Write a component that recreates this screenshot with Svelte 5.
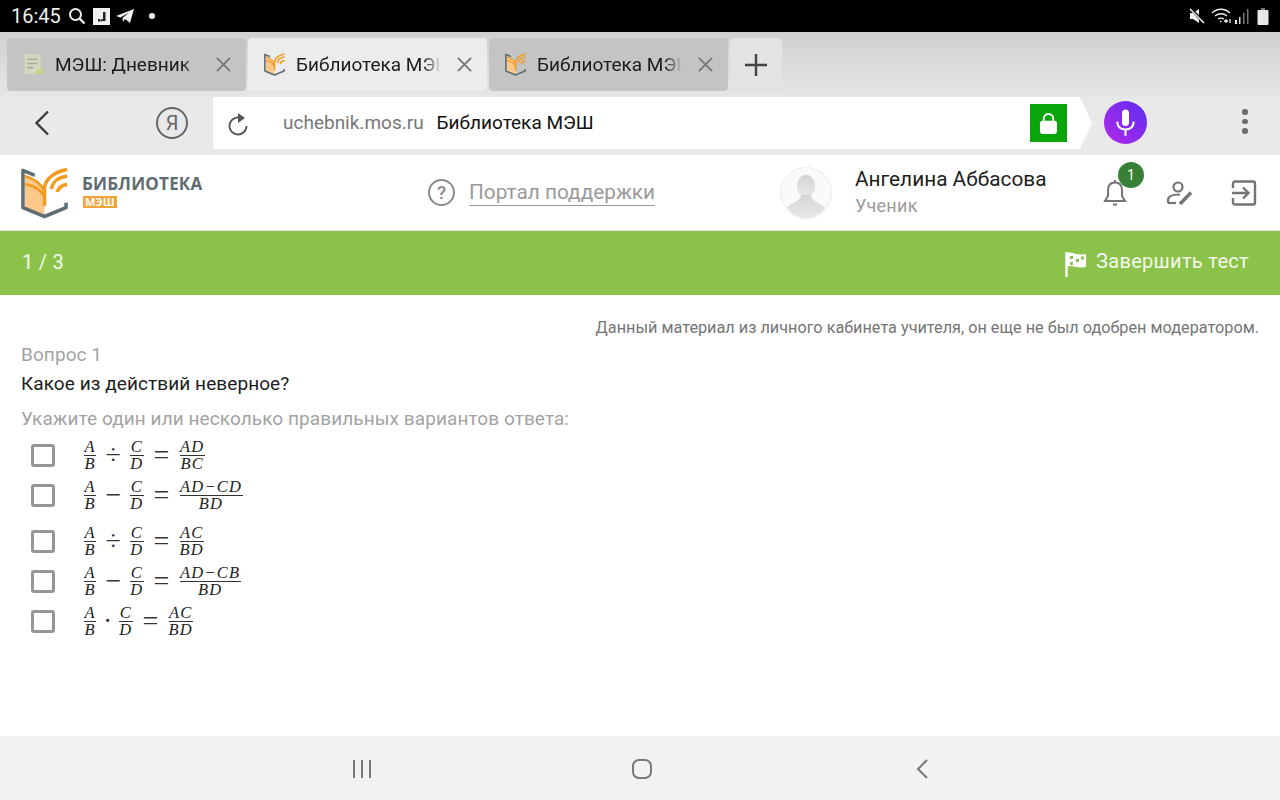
<script>
	const tabs = [
		{ title: 'МЭШ: Дневник', icon: 'doc', active: false },
		{ title: 'Библиотека МЭШ', icon: 'book', active: true },
		{ title: 'Библиотека МЭШ', icon: 'book', active: false }
	];

	const answers = [
		{ a: 'A', b: 'B', op: '÷', c: 'C', d: 'D', n: 'AD', m: 'BC' },
		{ a: 'A', b: 'B', op: '−', c: 'C', d: 'D', n: 'AD−CD', m: 'BD', tall: true },
		{ a: 'A', b: 'B', op: '÷', c: 'C', d: 'D', n: 'AC', m: 'BD' },
		{ a: 'A', b: 'B', op: '−', c: 'C', d: 'D', n: 'AD−CB', m: 'BD' },
		{ a: 'A', b: 'B', op: '·', c: 'C', d: 'D', n: 'AC', m: 'BD', narrow: true }
	];
</script>

{#snippet book(cls)}
	<svg class={cls} viewBox="0 0 48 52">
		<path d="M24 22 C19 14 11 9 4 7 V41 L24 48 Z" fill="#fcc98a" />
		<path d="M4 9 C12 11 20 16 24 24 M4 17 C12 18 19 22 24 29" fill="none" stroke="#f39a1f" stroke-width="2.600" />
		<path d="M14 8 L2 3 V41 L24 50 L46 41 V36" fill="none" stroke="#5f6e76" stroke-width="3.600" stroke-linejoin="round" />
		<path d="M24 39 V20 C26 10 36 4 47 2" fill="none" stroke="#f39a1f" stroke-width="3.600" />
		<path d="M31 22 C32 15 38 10 47 9" fill="none" stroke="#f39a1f" stroke-width="3.600" />
		<path d="M37 25 C38 21 42 18 47 17" fill="none" stroke="#f39a1f" stroke-width="3.600" />
	</svg>
{/snippet}

{#snippet frac(top, bottom)}
	<span class="frac">
		<span class="num">{top}</span>
		<span class="den">{bottom}</span>
	</span>
{/snippet}

<div class="screen">
	<!-- Status bar -->
	<div class="status">
		<span class="clock">16:45</span>
		<svg class="st-search" viewBox="0 0 18 18"><circle cx="7.500" cy="7.500" r="5.500" fill="none" stroke="#eee" stroke-width="2" /><path d="M11.500 11.500 L16.500 16.500" stroke="#eee" stroke-width="2.400" /></svg>
		<span class="st-j"><svg viewBox="0 0 17 17"><path d="M10 4 h2.500 v9 h-2.500 z M5 11 h2.500 v2.500 h-2.500 z M8 11.500 L10 11 V13 L8 13.500 Z" fill="#222" /></svg></span>
		<svg class="st-plane" viewBox="0 0 18 16"><path d="M0 8 L18 1 L14 15 L9 11 L7 14 L6.500 10 L13 4.500 L4.500 9.500 Z" fill="#eee" /></svg>
		<span class="st-dot"></span>
		<span class="status-space"></span>
		<svg class="st-mute" viewBox="0 0 16 16"><path d="M1 5 H4 L10 1 V15 L4 11 H1 Z" fill="#f2f2f2" /><path d="M2 1 L15 15" stroke="#000" stroke-width="3" /><path d="M1 1 L15 15" stroke="#f2f2f2" stroke-width="1.500" /></svg>
		<svg class="st-wifi" viewBox="0 0 20 16"><path d="M1 5 C6 0 14 0 19 5 M4 8 C7.500 5 12.500 5 16 8 M7 11 C8.500 10 11.500 10 13 11" fill="none" stroke="#eee" stroke-width="1.300" /><path d="M9 13.500 h1.500 M13 13 h4 M15 11 v4 M19 15 v-4" stroke="#eee" stroke-width="1.300" /></svg>
		<svg class="st-signal" viewBox="0 0 16 16"><path d="M1 12 h2 v4 h-2 z" fill="#eee" /><path d="M5 9 h1.500 v7 h-1.500 z" fill="#ddd" /><path d="M9 5 h1.500 v11 h-1.500 z M13 1 h1.500 v15 h-1.500 z" fill="#777" /></svg>
		<svg class="st-batt" viewBox="0 0 12 17"><path d="M4 0 h4 v2 h-4 z" fill="#777" /><rect x="0.500" y="2" width="11" height="15" rx="1" fill="#e8e8e8" /></svg>
	</div>

	<!-- Browser tabs -->
	<div class="chrome">
		<div class="tabs">
			{#each tabs as tab}
				<div class="tab" class:active={tab.active}>
					{#if tab.icon === 'doc'}
						<svg class="fav" viewBox="0 0 20 22">
							<rect x="1" y="1" width="16" height="19" rx="1" fill="#d4d8c0" stroke="#c4cdb0" />
							<path d="M4 6 h10 M4 10 h10 M4 14 h6" stroke="#a9b0a4" stroke-width="1.500" />
							<path d="M11 20 C12 16 15 14 19 14 V20 Z" fill="#c5d58a" />
						</svg>
					{:else}
						{@render book('fav')}
					{/if}
					<span class="tab-title">{tab.title}</span>
					<svg class="tab-x" viewBox="0 0 16 16"><path d="M1 1 L15 15 M15 1 L1 15" stroke="#777" stroke-width="2" /></svg>
				</div>
			{/each}
			<div class="tab-new">
				<svg viewBox="0 0 24 24"><path d="M12 1 V23 M1 12 H23" stroke="#444" stroke-width="2.400" /></svg>
			</div>
		</div>

		<!-- Address bar -->
		<div class="toolbar">
			<div class="tb-back">
				<svg viewBox="0 0 16 26"><path d="M14 1.500 L2.500 13 L14 24.500" fill="none" stroke="#3d3d3d" stroke-width="2.400" /></svg>
			</div>
			<div class="tb-ya">Я</div>
			<div class="urlbar">
				<svg class="reload" viewBox="0 0 22 24"><path d="M15 6.500 A8.500 8.500 0 1 0 19.500 14" fill="none" stroke="#555" stroke-width="1.800" /><path d="M11 1 L18 6 L11 11 Z" fill="#555" /></svg>
				<span class="domain">uchebnik.mos.ru</span>
				<span class="page-title">Библиотека МЭШ</span>
				<span class="lock">
					<svg viewBox="0 0 20 24"><path d="M5 10 V7 A5 5 0 0 1 15 7 V10" fill="none" stroke="#fff" stroke-width="2" /><rect x="1" y="9" width="18" height="14" rx="3" fill="#fff" /></svg>
				</span>
			</div>
			<div class="urltip"></div>
			<div class="mic">
				<svg viewBox="0 0 24 32"><rect x="8" y="1" width="8" height="19" rx="4" fill="#fff" /><path d="M2.500 15 C3 21 7 24 12 24 C17 24 21 21 21.500 15 M12 24 V31" fill="none" stroke="#fff" stroke-width="2.400" /></svg>
			</div>
			<div class="dots"><span></span><span></span><span></span></div>
		</div>
	</div>

	<!-- Site header -->
	<header class="site">
		<div class="logo">
			{@render book('logo-mark')}
			<div class="logo-text">
				<span class="logo-name">БИБЛИОТЕКА</span>
				<span class="logo-badge">МЭШ</span>
			</div>
		</div>
		<div class="support">
			<span class="support-q">?</span>
			<span class="support-link">Портал поддержки</span>
		</div>
		<div class="user">
			<div class="avatar">
				<svg viewBox="0 0 52 52">
					<defs>
						<linearGradient id="av" x1="0" y1="0" x2="0" y2="1">
							<stop offset="0" stop-color="#d4d4d4" />
							<stop offset="1" stop-color="#e9e9e9" />
						</linearGradient>
					</defs>
					<ellipse cx="26" cy="19" rx="9.500" ry="12" fill="url(#av)" />
					<path d="M21 28 C21 34 12 36 6 41 C12 49 19 52 26 52 C33 52 40 49 46 41 C40 36 31 34 31 28 Z" fill="url(#av)" />
				</svg>
			</div>
			<div class="user-text">
				<span class="user-name">Ангелина Аббасова</span>
				<span class="user-role">Ученик</span>
			</div>
		</div>
		<div class="actions">
			<div class="act bell">
				<svg viewBox="0 0 26 28"><path d="M13 3.500 C8 3.500 6 7 6 11 V17 L3 22 H23 L20 17 V11 C20 7 18 3.500 13 3.500 Z M13 1 V3.500 M11 25.500 H15" fill="none" stroke="#757575" stroke-width="2" /></svg>
				<span class="badge">1</span>
			</div>
			<div class="act edit">
				<svg viewBox="0 0 28 26"><circle cx="12" cy="7" r="4.500" fill="none" stroke="#757575" stroke-width="2.200" /><path d="M2 23 V20 C2 16 7 14.500 14 14.500" fill="none" stroke="#757575" stroke-width="2.200" /><path d="M2 23 H10" stroke="#757575" stroke-width="2.200" /><path d="M14 24 L25 12.500" stroke="#757575" stroke-width="3.400" /></svg>
			</div>
			<div class="act exit">
				<svg viewBox="0 0 26 26"><path d="M2 8 V3.500 A2 2 0 0 1 4 1.500 H22 A2 2 0 0 1 24 3.500 V22.500 A2 2 0 0 1 22 24.500 H4 A2 2 0 0 1 2 22.500 V18 M1 13 H17 M12 7.500 L17.500 13 L12 18.500" fill="none" stroke="#757575" stroke-width="2.400" /></svg>
			</div>
		</div>
	</header>

	<!-- Test progress -->
	<div class="progress">
		<span class="count">1 / 3</span>
		<span class="finish">
			<svg viewBox="0 0 22 26"><path d="M1.500 1 V26" stroke="#fff" stroke-width="2.400" /><path d="M2 2 C7 0 11 5 21 3 V16 C11 18 7 13 2 16 Z" fill="#fff" /><path d="M5 5 h3 v3 h-3 z M11 8 h3 v3 h-3 z M16 5.500 h3 v3 h-3 z M5 11 h3 v3 h-3 z" fill="#8bc34a" /></svg>
			<span class="finish-label">Завершить тест</span>
		</span>
	</div>

	<!-- Question -->
	<main class="content">
		<p class="note">Данный материал из личного кабинета учителя, он еще не был одобрен модератором.</p>
		<p class="q-num">Вопрос 1</p>
		<p class="q-text">Какое из действий неверное?</p>
		<p class="q-hint">Укажите один или несколько правильных вариантов ответа:</p>
		<div class="answers">
			{#each answers as item}
				<div class="answer" class:tall={item.tall}>
					<span class="check"></span>
					<span class="math">
						{@render frac(item.a, item.b)}
						<span class="op" class:narrow={item.narrow}>{item.op}</span>
						{@render frac(item.c, item.d)}
						<span class="eq">=</span>
						{@render frac(item.n, item.m)}
					</span>
				</div>
			{/each}
		</div>
	</main>

	<!-- Android nav -->
	<nav class="android">
		<svg viewBox="0 0 20 20"><path d="M2 1 V19 M10 1 V19 M18 1 V19" stroke="#7a7a7a" stroke-width="2" /></svg>
		<svg viewBox="0 0 20 20"><rect x="1" y="1" width="18" height="18" rx="6" fill="none" stroke="#7a7a7a" stroke-width="2" /></svg>
		<svg viewBox="0 0 20 20"><path d="M15 1 L6 10 L15 19" fill="none" stroke="#7a7a7a" stroke-width="2" /></svg>
	</nav>
</div>

<style>
	:global(body) {
		margin: 0;
		background: #fff;
	}
	.screen {
		width: 1280px;
		height: 800px;
		display: flex;
		flex-direction: column;
		overflow: hidden;
		font-family: Roboto, 'Noto Sans', sans-serif;
		color: #212121;
	}
	p {
		margin: 0;
	}

	.status {
		height: 32px;
		background: #000;
		display: flex;
		align-items: center;
		padding: 0 11px 0 11px;
		flex-shrink: 0;
	}
	.clock {
		font-size: 20px;
		color: #eee;
		margin-right: 7px;
	}
	.st-search {
		width: 18px;
		height: 18px;
		margin-right: 7px;
	}
	.st-j {
		width: 17px;
		height: 17px;
		background: #f0f0f0;
		margin-right: 6px;
		display: flex;
	}
	.st-plane {
		width: 18px;
		height: 16px;
		margin-right: 15px;
	}
	.st-dot {
		width: 6px;
		height: 6px;
		border-radius: 50%;
		background: #eee;
	}
	.status-space {
		flex: 1;
	}
	.st-mute {
		width: 16px;
		height: 16px;
		margin-right: 6px;
	}
	.st-wifi {
		width: 20px;
		height: 16px;
		margin-right: 3px;
	}
	.st-signal {
		width: 16px;
		height: 16px;
		margin-right: 7px;
	}
	.st-batt {
		width: 12px;
		height: 17px;
	}

	.chrome {
		height: 123px;
		flex-shrink: 0;
		background: linear-gradient(#d0d0d0, #e9e9e9 60%);
		display: flex;
		flex-direction: column;
	}
	.tabs {
		height: 65px;
		padding: 6px 0 0 7px;
		box-sizing: border-box;
		display: flex;
		gap: 2px;
		flex-shrink: 0;
	}
	.tab {
		width: 239px;
		height: 53px;
		border-radius: 4px;
		background: #c4c4c4;
		display: flex;
		align-items: center;
		padding: 0 15px 0 16px;
		box-sizing: border-box;
	}
	.tab.active {
		background: #ececec;
	}
	.tab-new {
		width: 52px;
		height: 53px;
		border-radius: 4px;
		background: #e3e3e3;
		display: flex;
		align-items: center;
		justify-content: center;
	}
	.tab-new svg {
		width: 24px;
		height: 24px;
	}
	.fav {
		width: 21px;
		height: 23px;
		flex-shrink: 0;
		margin-right: 11px;
	}
	.tab-title {
		flex: 1;
		overflow: hidden;
		white-space: nowrap;
		font-size: 19px;
		color: #1c1c1c;
		mask-image: linear-gradient(to right, #000 88%, transparent 100%);
	}
	.tab-x {
		width: 15px;
		height: 15px;
		margin-left: 16px;
		flex-shrink: 0;
	}

	.toolbar {
		height: 58px;
		display: flex;
		flex-shrink: 0;
		position: relative;
	}
	.tb-back {
		width: 156px;
		height: 52px;
		display: flex;
		align-items: center;
		padding-left: 34px;
		box-sizing: border-box;
	}
	.tb-back svg {
		width: 16px;
		height: 26px;
	}
	.tb-ya {
		width: 28px;
		height: 28px;
		margin-top: 10px;
		border: 2.500px solid #666;
		border-radius: 50%;
		color: #666;
		font-size: 20px;
		display: flex;
		align-items: center;
		justify-content: center;
	}
	.urlbar {
		width: 867px;
		height: 52px;
		margin-left: 25px;
		background: #fff;
		display: flex;
		align-items: center;
		padding-left: 14px;
		box-sizing: border-box;
		font-size: 19px;
	}
	.urltip {
		width: 0;
		height: 0;
		border-top: 26px solid transparent;
		border-bottom: 26px solid transparent;
		border-left: 12px solid #fff;
	}
	.reload {
		width: 22px;
		height: 24px;
		margin-right: 34px;
		margin-top: 2px;
	}
	.domain {
		color: #777;
		margin-right: 13px;
		margin-top: -2px;
	}
	.page-title {
		color: #111;
		flex: 1;
		margin-top: -2px;
	}
	.lock {
		width: 37px;
		height: 38px;
		background: #0aa50a;
		display: flex;
		align-items: center;
		justify-content: center;
		margin-right: 13px;
	}
	.lock svg {
		width: 19px;
		height: 23px;
	}
	.mic {
		width: 43px;
		height: 43px;
		border-radius: 50%;
		margin: 4px 0 0 12px;
		background: linear-gradient(45deg, #b42ae8, #5b2cf0);
		display: flex;
		align-items: center;
		justify-content: center;
	}
	.mic svg {
		width: 21px;
		height: 29px;
	}
	.dots {
		margin: 12px 0 0 95px;
		display: flex;
		flex-direction: column;
		gap: 4px;
	}
	.dots span {
		width: 5.500px;
		height: 5.500px;
		border-radius: 50%;
		background: #6c6c6c;
	}

	.site {
		height: 76px;
		flex-shrink: 0;
		background: #fff;
		border-bottom: 1px solid #e6e6e6;
		box-sizing: border-box;
		display: flex;
		align-items: center;
		padding-left: 21px;
	}
	.logo {
		display: flex;
		align-items: center;
		width: 407px;
		flex-shrink: 0;
	}
	.logo-mark {
		width: 47px;
		height: 52px;
		margin-right: 14px;
	}
	.logo-text {
		display: flex;
		flex-direction: column;
		align-items: flex-start;
		gap: 2px;
		margin-top: -3px;
	}
	.logo-name {
		font-family: 'Open Sans', sans-serif;
		font-weight: 700;
		font-size: 17px;
		line-height: 20px;
		color: #5f6b73;
		letter-spacing: 0.200px;
	}
	.logo-badge {
		background: #f2a33a;
		color: #fff;
		font-family: 'Open Sans', sans-serif;
		font-weight: 700;
		font-size: 11px;
		line-height: 12px;
		padding: 0 2px;
		margin-left: 1px;
	}
	.support {
		display: flex;
		align-items: center;
		width: 352px;
		flex-shrink: 0;
	}
	.support-q {
		width: 23px;
		height: 23px;
		border: 2px solid #8a8a8a;
		border-radius: 50%;
		color: #8a8a8a;
		font-size: 19px;
		font-weight: 500;
		display: flex;
		align-items: center;
		justify-content: center;
		margin-right: 14px;
	}
	.support-link {
		font-size: 20.800px;
		color: #9a9a9a;
		border-bottom: 1px solid #9a9a9a;
		line-height: 26px;
	}
	.user {
		display: flex;
		align-items: center;
		width: 322px;
		flex-shrink: 0;
	}
	.avatar {
		width: 52px;
		height: 52px;
		border-radius: 50%;
		border: 1px solid #ececec;
		overflow: hidden;
		margin-right: 23px;
		background: #fafafa;
		box-sizing: border-box;
		display: flex;
		flex-shrink: 0;
	}
	.avatar svg {
		width: 100%;
		height: 100%;
	}
	.user-text {
		display: flex;
		flex-direction: column;
		margin-top: -1px;
	}
	.user-name {
		font-size: 20.800px;
		line-height: 27px;
		color: #1d1d1d;
	}
	.user-role {
		font-size: 18px;
		line-height: 25px;
		color: #9a9a9a;
		letter-spacing: 0.300px;
	}
	.actions {
		display: flex;
		align-items: center;
	}
	.act {
		position: relative;
		display: flex;
	}
	.bell svg {
		width: 26px;
		height: 28px;
	}
	.edit {
		margin-left: 38px;
	}
	.edit svg {
		width: 28px;
		height: 26px;
	}
	.exit {
		margin-left: 37px;
	}
	.exit svg {
		width: 26px;
		height: 26px;
	}
	.badge {
		position: absolute;
		left: 16px;
		top: -17px;
		width: 26px;
		height: 26px;
		border-radius: 50%;
		background: #388038;
		color: #fff;
		font-size: 14px;
		display: flex;
		align-items: center;
		justify-content: center;
	}

	.progress {
		height: 64px;
		flex-shrink: 0;
		background: #8bc34a;
		color: #f4f9ec;
		font-size: 20px;
		display: flex;
		align-items: center;
		justify-content: space-between;
		padding: 0 31px 0 22px;
		letter-spacing: 0.300px;
	}
	.count {
		margin-top: -3px;
	}
	.finish {
		display: flex;
		align-items: center;
		gap: 9px;
	}
	.finish-label {
		margin-top: -4px;
	}
	.finish svg {
		width: 22px;
		height: 26px;
		margin-top: 2px;
	}

	.content {
		flex: 1;
		background: #fff;
		padding: 0 21px;
		min-height: 0;
	}
	.note {
		text-align: right;
		font-size: 16.250px;
		line-height: 20px;
		color: #757575;
		margin-top: 23px;
	}
	.q-num,
	.q-hint {
		font-size: 19px;
		color: #a3a3a3;
		line-height: 24px;
		letter-spacing: 0.080px;
	}
	.q-num {
		margin-top: 5px;
	}
	.q-text {
		font-size: 19px;
		letter-spacing: 0.080px;
		line-height: 24px;
		margin-top: 5px;
		color: #1d1d1d;
	}
	.q-hint {
		margin-top: 11px;
	}
	.answers {
		margin-top: 4px;
		display: flex;
		flex-direction: column;
	}
	.answer {
		height: 40px;
		display: flex;
		align-items: center;
		padding-left: 10px;
	}
	.answer.tall {
		margin-bottom: 6px;
	}
	.check {
		width: 18px;
		height: 17px;
		border: 3px solid #969696;
		border-radius: 3px;
		margin-right: 29px;
		flex-shrink: 0;
	}
	.math {
		display: flex;
		align-items: center;
		font-family: 'Liberation Serif', serif;
		color: #222;
	}
	.frac {
		display: inline-flex;
		flex-direction: column;
		align-items: center;
		font-style: italic;
		font-size: 16.500px;
		line-height: 16px;
		letter-spacing: 1.200px;
	}
	.num {
		border-bottom: 1px solid #333;
		align-self: stretch;
		text-align: center;
		padding: 0 0.500px;
	}
	.op,
	.eq {
		font-size: 28px;
		line-height: 28px;
		text-align: center;
		flex-shrink: 0;
		font-weight: 400;
		color: #333;
	}
	.op {
		width: 34px;
	}
	.op.narrow {
		width: 23px;
	}
	.eq {
		width: 36px;
	}

	.android {
		height: 64px;
		flex-shrink: 0;
		background: #f2f2f2;
		display: flex;
		align-items: center;
		justify-content: center;
		gap: 260px;
		padding: 2px 0 0 4px;
		box-sizing: border-box;
	}
	.android svg {
		width: 20px;
		height: 20px;
	}
</style>
